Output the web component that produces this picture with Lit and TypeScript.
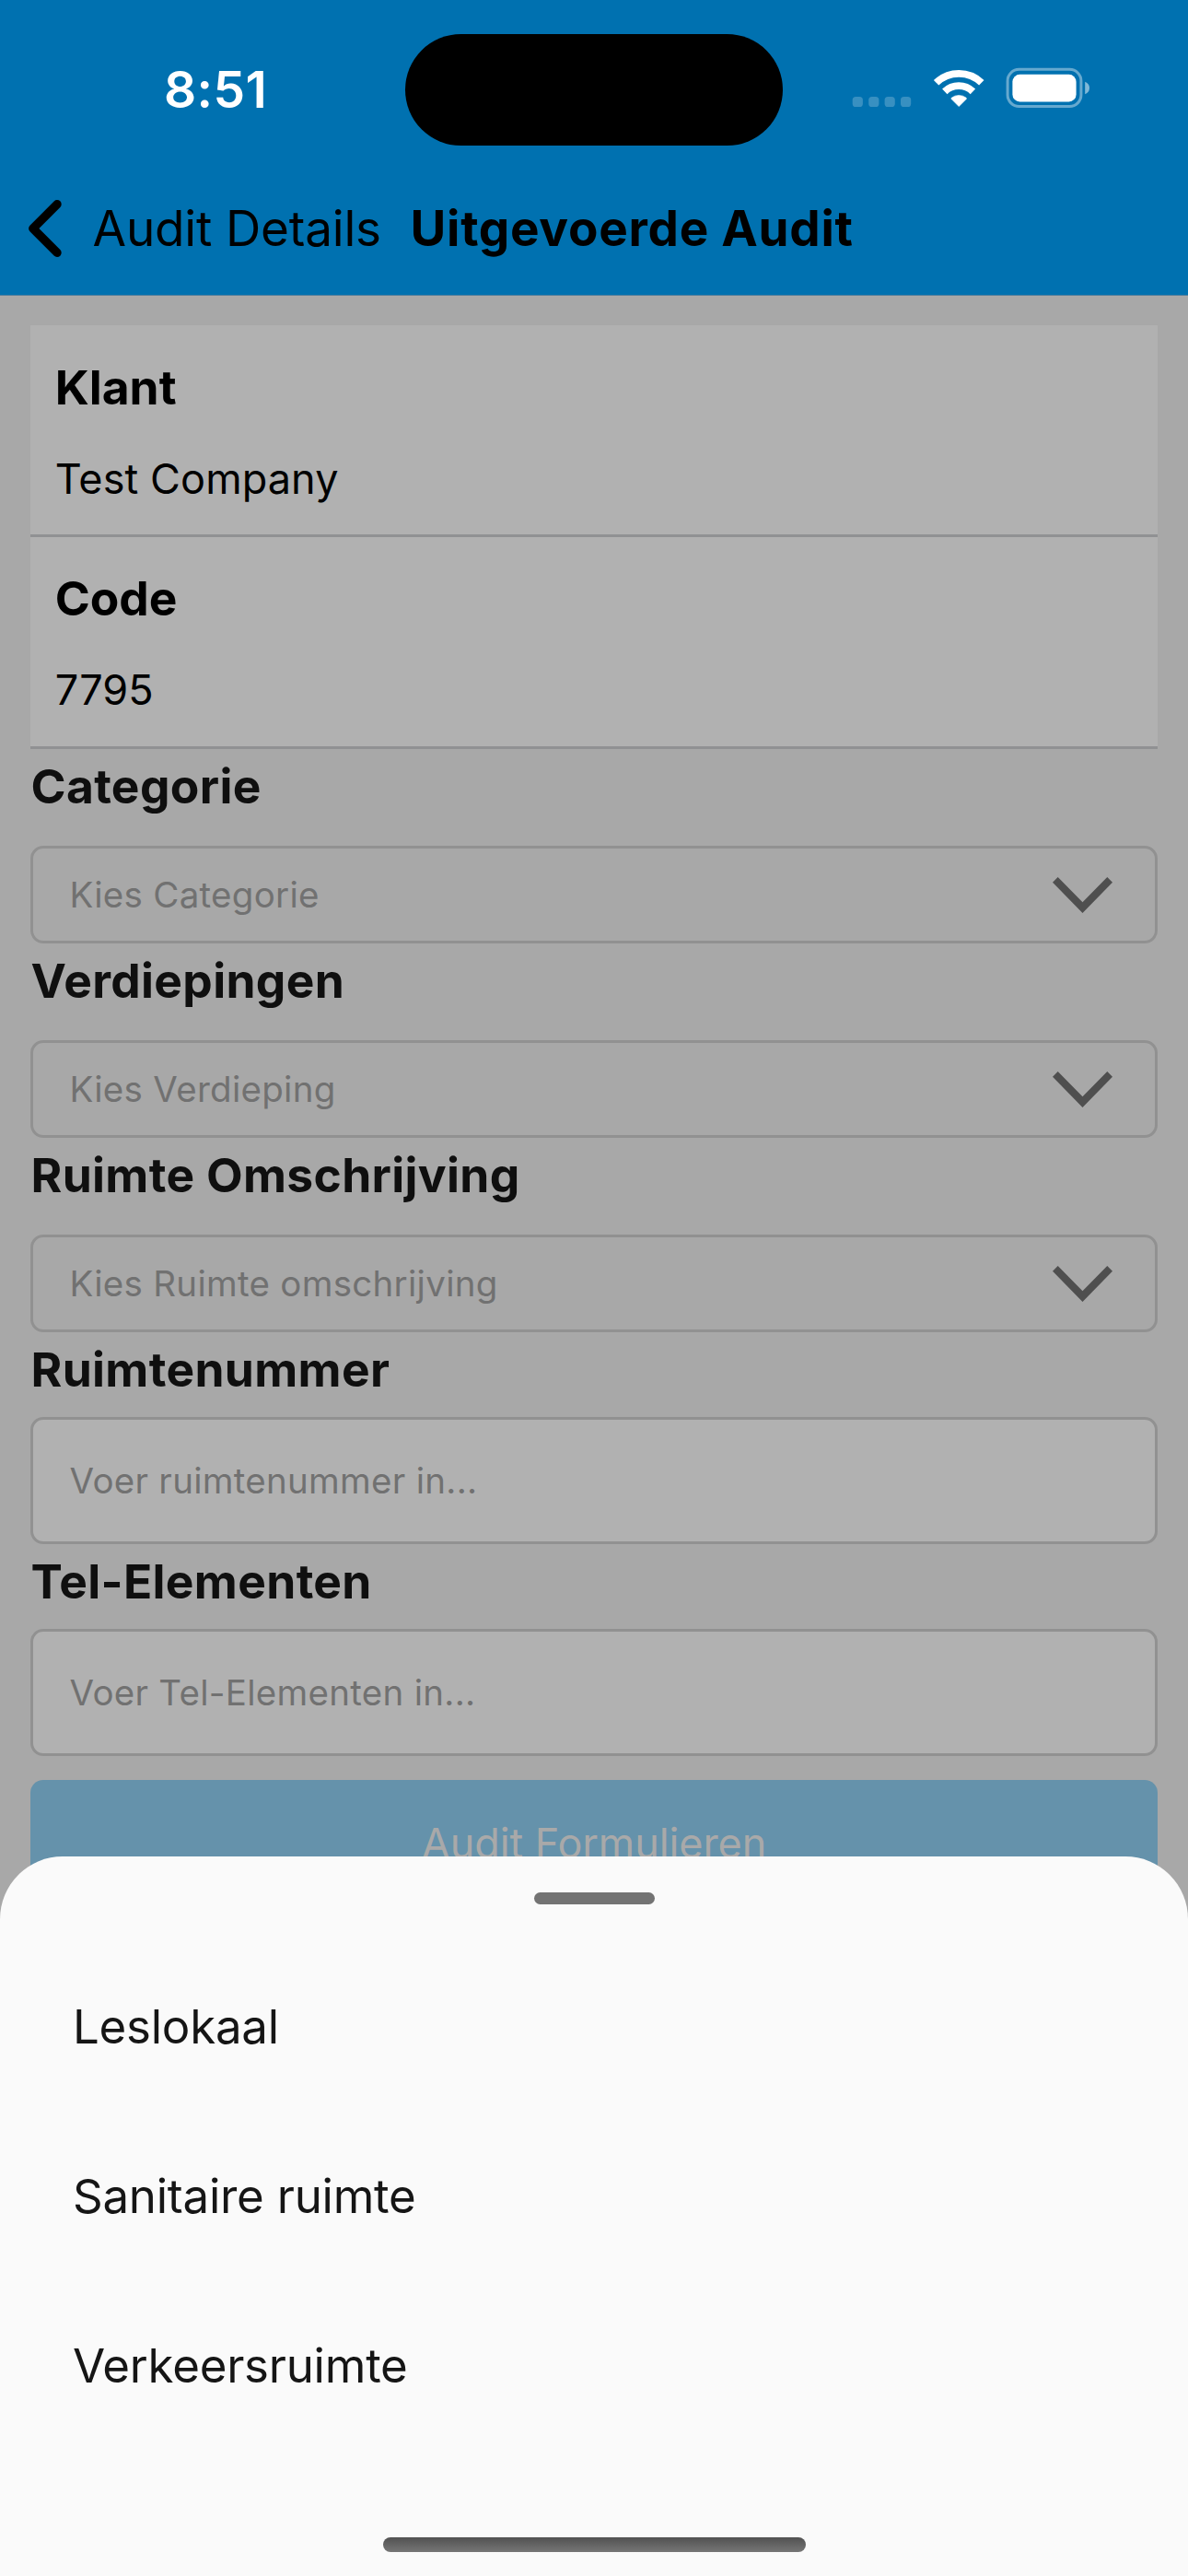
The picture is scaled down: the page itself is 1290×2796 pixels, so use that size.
import { LitElement, css, html, nothing } from "lit";
import { customElement, property } from "lit/decorators.js";

@customElement("status-bar")
class StatusBar extends LitElement {
  static styles = css`
    :host {
      display: grid;
      grid-template-columns: 440px 410px 440px;
      align-items: center;
      height: 193px;
      color: #fff;
    }
    .time {
      padding-left: 178px;
      font-size: 55px;
      font-weight: 600;
      line-height: 66px;
      letter-spacing: 0.39px;
      white-space: nowrap;
    }
    .island {
      height: 121px;
      margin-top: 2px;
      border-radius: 61px;
      background: #000;
    }
    .icons {
      display: flex;
      padding-left: 75px;
      margin-bottom: 1px;
    }
    svg {
      display: block;
    }
  `;

  render() {
    return html`
      <div class="time">8:51</div>
      <div class="island"></div>
      <div class="icons">
        <svg width="260" height="46" viewBox="925 73 260 46">
          <g fill="#fff" fill-opacity="0.22">
            <rect x="925.7" y="105" width="11.2" height="11" rx="3.6" />
            <rect x="943.2" y="105" width="11.2" height="11" rx="3.6" />
            <rect x="960.6" y="105" width="11.2" height="11" rx="3.6" />
            <rect x="978" y="105" width="11.2" height="11" rx="3.6" />
          </g>
          <g fill="none" stroke="#fff">
            <path d="M1016.6 89.7 A35.5 35.5 0 0 1 1065.8 89.7" stroke-width="7.8" />
            <path d="M1025.8 99.4 A22 22 0 0 1 1056.4 99.4" stroke-width="7.8" />
          </g>
          <path
            d="M1041.2 115.6 L1033.2 107.6 Q1032.6 106.8 1033.4 106.1 Q1036.8 103.4 1041.2 103.4 Q1045.6 103.4 1049 106.1 Q1049.8 106.8 1049.2 107.6 Z"
            fill="#fff"
            stroke="#fff"
            stroke-width="0.6"
            stroke-linejoin="round"
          />
          <rect x="1094.1" y="75.3" width="79.8" height="40.2" rx="12.5" fill="none" stroke="#fff" stroke-opacity="0.4" stroke-width="3" />
          <rect x="1099.4" y="80.8" width="69.2" height="29.6" rx="8" fill="#fff" />
          <path d="M1178.2 88.8 Q1183 91 1183 95.5 Q1183 100 1178.2 102.2 Z" fill="#fff" fill-opacity="0.5" />
        </svg>
      </div>
    `;
  }
}

@customElement("nav-bar")
class NavBar extends LitElement {
  static styles = css`
    :host {
      display: flex;
      align-items: center;
      box-sizing: border-box;
      height: 128px;
      padding: 0 0 17px 29px;
      border-bottom: 1px solid #4f7d9c;
      color: #000;
      font-size: 53px;
      line-height: 64px;
      white-space: nowrap;
    }
    .chevron {
      display: block;
      flex: none;
    }
    .back {
      width: 374.5px;
      padding-left: 29.5px;
      letter-spacing: -0.17px;
      box-sizing: border-box;
    }
    .title {
      font-weight: 700;
      letter-spacing: 0.74px;
    }
  `;

  render() {
    return html`
      <svg class="chevron" width="42" height="66" viewBox="0 0 42 66">
        <path d="M33 6.7 L6.8 33 L33 59.3" fill="none" stroke="#000" stroke-width="9.4" stroke-linecap="round" stroke-linejoin="round" />
      </svg>
      <div class="back">Audit Details</div>
      <div class="title">Uitgevoerde Audit</div>
    `;
  }
}

@customElement("info-card")
class InfoCard extends LitElement {
  static styles = css`
    :host {
      display: flex;
      flex-direction: column;
      gap: 40.7px;
      box-sizing: border-box;
      height: 229.66px;
      padding: 35.5px 26.7px 0;
      background: #b1b1b1;
      border-bottom: 3px solid #909193;
      color: #000;
      white-space: nowrap;
    }
    .name {
      font-size: 51.5px;
      font-weight: 700;
      line-height: 63px;
    }
    .value {
      font-size: 45px;
      line-height: 54px;
      letter-spacing: 0.1px;
    }
  `;

  @property() name = "";
  @property() value = "";

  render() {
    return html`
      <div class="name">${this.name}</div>
      <div class="value">${this.value}</div>
    `;
  }
}

@customElement("form-field")
class FormField extends LitElement {
  static styles = css`
    :host {
      display: block;
      padding-top: 9px;
      white-space: nowrap;
    }
    .label {
      padding-left: 0.5px;
      color: #0f0f0f;
      font-size: 51.5px;
      font-weight: 700;
      line-height: 63px;
      letter-spacing: 0.34px;
    }
    .box {
      display: flex;
      align-items: center;
      justify-content: space-between;
      box-sizing: border-box;
      border: 3px solid #919191;
      border-radius: 14px;
      padding: 0 46.5px 0 39.5px;
      color: #717171;
      font-size: 38.5px;
      line-height: 46px;
      letter-spacing: 0.28px;
    }
    .select {
      height: 106px;
      margin-top: 33px;
    }
    .input {
      height: 138px;
      margin-top: 20px;
      background: #b1b1b1;
    }
    svg {
      display: block;
      margin-top: 1px;
    }
  `;

  @property() label = "";
  @property() hint = "";
  @property() kind: "select" | "input" = "select";

  render() {
    return html`
      <div class="label">${this.label}</div>
      <div class="box ${this.kind}">
        <span>${this.hint}</span>
        ${this.kind === "select"
          ? html`<svg width="65" height="39" viewBox="0 0 65 39">
              <path d="M0 5.7 L5.7 0 L32.5 27.2 L59.3 0 L65 5.7 L32.5 39 Z" fill="#4f4f4f" />
            </svg>`
          : nothing}
      </div>
    `;
  }
}

@customElement("bottom-sheet")
class BottomSheet extends LitElement {
  static styles = css`
    :host {
      display: flex;
      flex-direction: column;
      align-items: center;
      box-sizing: border-box;
      height: 781px;
      padding-top: 39px;
      border-radius: 68px 68px 0 0;
      background: #fafafa;
    }
    .handle {
      width: 131px;
      height: 13px;
      border-radius: 6.5px;
      background: #737373;
    }
    .list {
      align-self: stretch;
      margin-top: 40.5px;
      padding: 0 79px;
    }
    .item {
      color: #151515;
      font-size: 51px;
      line-height: 184px;
      letter-spacing: -0.25px;
      white-space: nowrap;
    }
    .home {
      width: 459px;
      height: 16px;
      margin-top: auto;
      margin-bottom: 26px;
      border-radius: 8px;
      background: linear-gradient(#515151, #767676);
    }
  `;

  @property({ attribute: false }) items: string[] = [];

  render() {
    return html`
      <div class="handle"></div>
      <div class="list">${this.items.map((item) => html`<div class="item">${item}</div>`)}</div>
      <div class="home"></div>
    `;
  }
}

@customElement("app-root")
class AppRoot extends LitElement {
  static styles = css`
    :host {
      display: block;
      position: relative;
      width: 1290px;
      height: 2796px;
      overflow: hidden;
      background: #a8a8a8;
      font-family: Inter, "Liberation Sans", sans-serif;
    }
    .header {
      background: #0071b0;
    }
    .content {
      padding: 32.33px 33px 0;
    }
    .submit {
      height: 137px;
      margin-top: 26px;
      border-radius: 14px;
      background: #6592ab;
      color: #a9a9a9;
      font-size: 45px;
      line-height: 137px;
      letter-spacing: -0.09px;
      text-align: center;
    }
    .sheet {
      position: absolute;
      left: 0;
      right: 0;
      bottom: 0;
    }
  `;

  private fields = [
    { kind: "select", label: "Categorie", hint: "Kies Categorie" },
    { kind: "select", label: "Verdiepingen", hint: "Kies Verdieping" },
    { kind: "select", label: "Ruimte Omschrijving", hint: "Kies Ruimte omschrijving" },
    { kind: "input", label: "Ruimtenummer", hint: "Voer ruimtenummer in..." },
    { kind: "input", label: "Tel-Elementen", hint: "Voer Tel-Elementen in..." },
  ];

  private rooms = ["Leslokaal", "Sanitaire ruimte", "Verkeersruimte"];

  render() {
    return html`
      <div class="header">
        <status-bar></status-bar>
        <nav-bar></nav-bar>
      </div>
      <div class="content">
        <info-card name="Klant" value="Test Company"></info-card>
        <info-card name="Code" value="7795"></info-card>
        ${this.fields.map(
          (f) => html`<form-field kind=${f.kind} label=${f.label} hint=${f.hint}></form-field>`
        )}
        <div class="submit">Audit Formulieren</div>
      </div>
      <bottom-sheet class="sheet" .items=${this.rooms}></bottom-sheet>
    `;
  }
}
